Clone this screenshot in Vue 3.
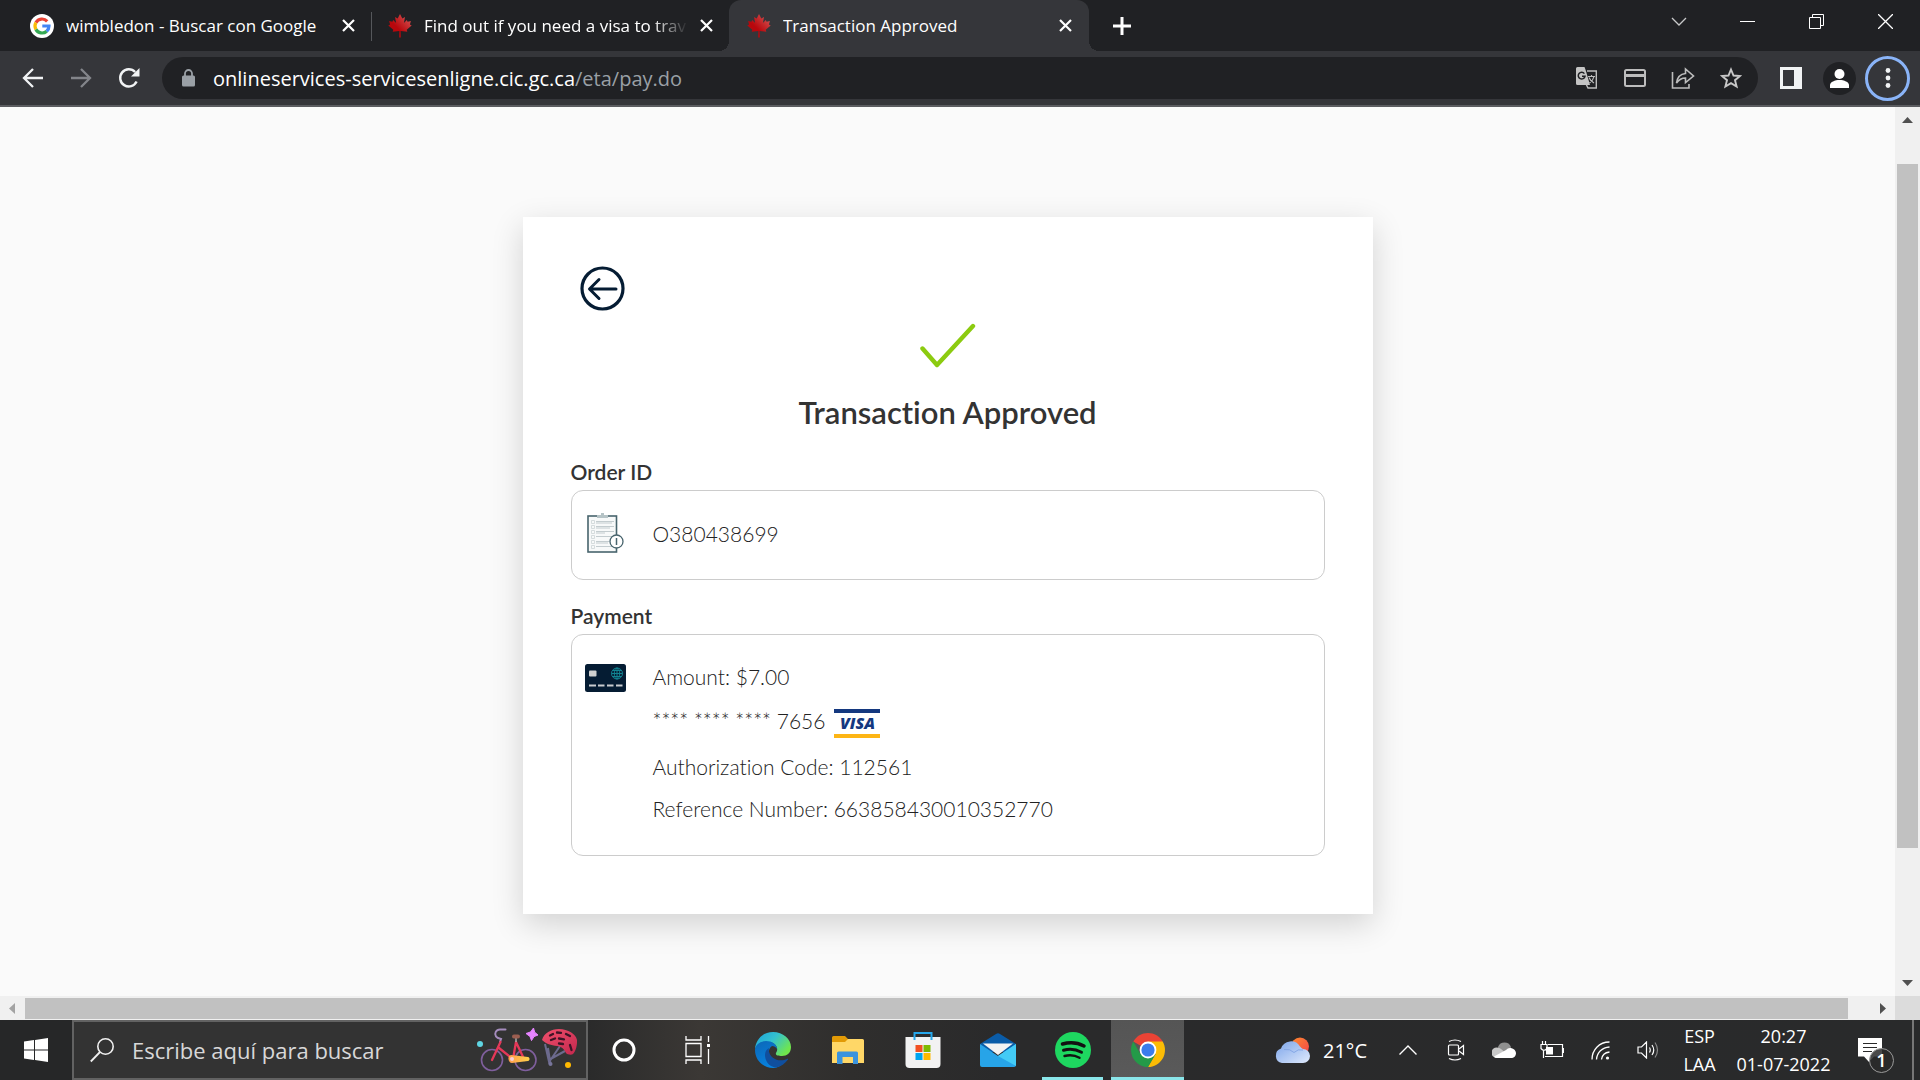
<script setup>
import { ref } from 'vue'

const host = ref('onlineservices-servicesenligne.cic.gc.ca')
const path = '/eta/pay.do'
const search = ref('')

const leaf =
  'M12 0l2.3 4.4 2.7-1.5-1.1 6 2.9-2.9.8 1.7 3.3-.6-1 3.3 1.8 1-5 4.3.6 2-6.7-.8.2 6.6h-1.600l.2-6.600-6.700 .8.6-2-5-4.300 1.800-1-1-3.300 3.300 .6.8-1.700 2.900 2.900-1.100-6 2.700 1.500z'

const tabs = [
  { title: 'wimbledon - Buscar con Google', icon: 'google', kind: 'first' },
  { title: 'Find out if you need a visa to trav', icon: 'leaf', kind: 'second' },
  { title: 'Transaction Approved', icon: 'leaf', kind: 'active' },
]
</script>

<template>
  <div class="desktop">
    <header class="tabstrip">
      <nav class="tabs" aria-label="Tabs">
        <div v-for="tab in tabs" :key="tab.title" class="tab" :class="tab.kind">
          <svg v-if="tab.icon === 'google'" class="favicon" viewBox="0 0 24 24">
            <circle cx="12" cy="12" r="12" fill="#fff" />
            <g fill="none" stroke-width="3.2">
              <path d="M17.200 7.300A7 7 0 0 0 5.900 8.600" stroke="#ea4335" />
              <path d="M5.900 8.600A7 7 0 0 0 5.900 15.400" stroke="#fbbc05" />
              <path d="M5.900 15.400A7 7 0 0 0 16.700 17.200" stroke="#34a853" />
              <path d="M16.700 17.200A7 7 0 0 0 19 12H12.300" stroke="#4285f4" />
            </g>
          </svg>
          <svg v-else class="favicon" viewBox="0 0 24 24">
            <defs>
              <linearGradient id="leafShade" x1="0" y1="1" x2="1" y2="0">
                <stop offset=".4" stop-color="#b8070c" />
                <stop offset="1" stop-color="#d9605f" />
              </linearGradient>
            </defs>
            <path :d="leaf" fill="url(#leafShade)" />
          </svg>
          <span class="tab-title">{{ tab.title }}</span>
          <button class="tab-close" aria-label="Close tab">
            <svg width="13" height="13" viewBox="0 0 13 13"><path d="M1 1l11 11M12 1L1 12" stroke="#fff" stroke-width="2.2" /></svg>
          </button>
        </div>
      </nav>
      <button class="new-tab" aria-label="New tab">
        <svg width="18" height="18" viewBox="0 0 18 18"><path d="M9 0v18M0 9h18" stroke="#fff" stroke-width="3" /></svg>
      </button>
      <div class="window-controls">
        <button aria-label="Search tabs"><svg width="16" height="16" viewBox="0 0 16 16"><path d="M1 4l7 7 7-7" fill="none" stroke="#c8c9ca" stroke-width="1.3" /></svg></button>
        <button aria-label="Minimize"><svg width="15" height="15" viewBox="0 0 15 15"><path d="M0 7.500h15" stroke="#fff" /></svg></button>
        <button aria-label="Restore"><svg width="15" height="15" viewBox="0 0 15 15"><path d="M.5 3.500h11v11H.5zM3.500 3.500V.5h11v11h-3" fill="none" stroke="#fff" /></svg></button>
        <button aria-label="Close"><svg width="15" height="15" viewBox="0 0 15 15"><path d="M0 0l15 15M15 0L0 15" stroke="#fff" stroke-width="1.3" /></svg></button>
      </div>
    </header>

    <div class="toolbar">
      <button class="tool" aria-label="Back"><svg width="22" height="22" viewBox="0 0 22 22"><path d="M21 11H3M11 2l-9 9 9 9" fill="none" stroke="#f1f3f4" stroke-width="2.3" /></svg></button>
      <button class="tool" aria-label="Forward"><svg width="22" height="22" viewBox="0 0 22 22"><path d="M1 11h18M11 2l9 9-9 9" fill="none" stroke="#83858a" stroke-width="2.3" /></svg></button>
      <button class="tool" aria-label="Reload"><svg width="22" height="22" viewBox="0 0 22 22"><path d="M18.600 14.500a8.600 8.600 0 1 1-1.500-9.500" fill="none" stroke="#f1f3f4" stroke-width="2.4" /><path d="M21.500 1v8.500H13z" fill="#f1f3f4" /></svg></button>
      <div class="omnibox">
        <svg class="lock" width="13" height="18" viewBox="0 0 13 18"><rect y="6.5" width="13" height="11" rx="1.5" fill="#9aa0a6" /><path d="M3 7V4.500a3.500 3.500 0 0 1 7 0V7" fill="none" stroke="#9aa0a6" stroke-width="1.8" /></svg>
        <label class="url"><input v-model="host" class="url-host" aria-label="Address" spellcheck="false" /><span class="url-path">{{ path }}</span></label>
        <button class="tool" aria-label="Translate">
          <svg width="22" height="22" viewBox="0 0 22 22">
            <path d="M11 4h9.300v17H12l-2-4" fill="none" stroke="#bdbdbd" stroke-width="1.4" />
            <path d="M1.500 0h7l1.200 3.200L14 18H1.500A1.500 1.500 0 0 1 0 16.500v-15A1.500 1.500 0 0 1 1.500 0z" fill="#c4c4c4" />
            <path d="M8.400 6.600A3.400 3.400 0 1 0 9 9.300H6" fill="none" stroke="#202124" stroke-width="1.5" />
            <path d="M12 9.500h7M15.500 8v1.500M18 9.500c-.6 3-2.500 5-4.500 6.500M13 10.500c1 2.500 3 4.500 5 5.500" fill="none" stroke="#bdbdbd" stroke-width="1.2" />
          </svg>
        </button>
        <button class="tool" aria-label="Payment methods"><svg width="22" height="18" viewBox="0 0 22 18"><rect x="1" y="1" width="20" height="16" rx="1.5" fill="none" stroke="#bdbdbd" stroke-width="2" /><path d="M1 6.500h20" stroke="#bdbdbd" stroke-width="3" /></svg></button>
        <button class="tool" aria-label="Share"><svg width="24" height="22" viewBox="0 0 24 22"><path d="M1.500 5v16H18v-4M5.500 16c.8-6 4-9 9-9.500V2l8 7-8 6.500v-4.500c-4 0-6.500 1.500-9 5z" fill="none" stroke="#bdbdbd" stroke-width="1.6" /></svg></button>
        <button class="tool" aria-label="Bookmark"><svg width="22" height="22" viewBox="0 0 22 22"><path d="M11 2.500l2.500 6 6.500.5-5 4.200 1.600 6.300-5.600-3.400-5.600 3.400L7 13.200 2 9l6.500-.5z" fill="none" stroke="#c8c8c8" stroke-width="1.9" /></svg></button>
      </div>
      <button class="tool" aria-label="Side panel"><svg width="22" height="22" viewBox="0 0 22 22"><path d="M0 0h22v22H0zM3 3v16h11V3z" fill="#f1f3f4" fill-rule="evenodd" /></svg></button>
      <button class="tool" aria-label="Profile"><svg width="33" height="33" viewBox="0 0 33 33"><circle cx="16.500" cy="16.500" r="16.500" fill="#202124" /><circle cx="16.500" cy="12" r="5" fill="#fff" /><path d="M7 26v-3c0-3 5-5 9.500-5s9.500 2 9.500 5v3z" fill="#fff" /></svg></button>
      <button class="menu" aria-label="Menu"><svg width="6" height="20" viewBox="0 0 6 20"><g fill="#f1f3f4"><circle cx="3" cy="2.500" r="2.400" /><circle cx="3" cy="10" r="2.400" /><circle cx="3" cy="17.500" r="2.400" /></g></svg></button>
    </div>

    <div class="viewport">
      <main class="page">
        <section class="card">
          <button class="back" aria-label="Back">
            <svg width="45" height="45" viewBox="0 0 45 45" fill="none" stroke="#051c33" stroke-width="3.2" stroke-linecap="round" stroke-linejoin="round"><circle cx="22.500" cy="22.500" r="20.500" /><path d="M36 23H10M19 13.500L9.500 23l9.500 9.500" stroke-width="3" /></svg>
          </button>
          <svg class="check" width="56" height="46" viewBox="0 0 56 46"><path d="M2.500 25.500L17 42 53 3" fill="none" stroke="#8ccb10" stroke-width="4.4" stroke-linecap="round" stroke-linejoin="round" /></svg>
          <h1>Transaction Approved</h1>

          <h2>Order ID</h2>
          <div class="panel order">
            <div class="panel-icon">
              <svg width="37" height="41" viewBox="0 0 37 41">
                <rect x="1" y="3" width="28.5" height="36" fill="#f7f9f9" stroke="#48646d" stroke-width="1.6" />
                <path d="M10 5V2h4V0h3v2h4v3z" fill="#b5c3c6" />
                <path d="M9 8.500h18M9 10h16M9 13.500h18M9 15h14M9 18.500h18M9 20h9M9 23.500h16M9 28.500h13M9 30h12M9 33.500h16" stroke="#c3cccf" stroke-width="1" />
                <path d="M4.500 7.500h3v3h-3zM4.500 12.500h3v3h-3zM4.500 17.500h3v3h-3zM4.500 22.500h3v3h-3zM4.500 27.500h3v3h-3zM4.500 32.500h3v3h-3z" fill="none" stroke="#ccd4d6" stroke-width=".8" />
                <circle cx="29.500" cy="28.500" r="6.500" fill="#fff" stroke="#48646d" stroke-width="1.3" />
                <path d="M29.500 25v7" stroke="#48646d" stroke-width="1.5" />
              </svg>
            </div>
            <div class="lines"><p>O380438699</p></div>
          </div>

          <h2>Payment</h2>
          <div class="panel payment">
            <div class="panel-icon">
              <svg width="41" height="28" viewBox="0 0 41 28">
                <rect width="41" height="28" rx="2.5" fill="#051c33" />
                <rect x="4" y="6.5" width="7.5" height="6" rx="1" fill="#d0d0d0" />
                <path d="M4 21.500h7M13 21.500h6.500M22 21.500h6.500M31 21.500h6.500" stroke="#c9ccd0" stroke-width="2.2" />
                <g fill="none" stroke="#118391" stroke-width="1"><circle cx="32" cy="9.500" r="5.500" /><ellipse cx="32" cy="9.500" rx="2.700" ry="5.500" /><path d="M26.500 9.500h11M32 4v11M27.500 6.500h9M27.500 12.500h9" /></g>
              </svg>
            </div>
            <div class="lines">
              <p>Amount: $7.00</p>
              <p class="account">**** **** **** 7656 <span class="visa">VISA</span></p>
              <p>Authorization Code: 112561</p>
              <p>Reference Number: 663858430010352770</p>
            </div>
          </div>
        </section>
      </main>
      <div class="vbar">
        <svg width="11" height="6" viewBox="0 0 11 6"><path d="M5.500 0L11 6H0z" fill="#505050" /></svg>
        <div class="vtrack"><div class="thumb"></div></div>
        <svg width="11" height="6" viewBox="0 0 11 6"><path d="M5.500 6L11 0H0z" fill="#505050" /></svg>
      </div>
      <div class="hbar">
        <svg width="6" height="11" viewBox="0 0 6 11"><path d="M0 5.500L6 0v11z" fill="#a3a3a3" /></svg>
        <div class="htrack"><div class="thumb"></div></div>
        <svg width="6" height="11" viewBox="0 0 6 11"><path d="M6 5.500L0 0v11z" fill="#505050" /></svg>
      </div>
      <div class="corner"></div>
    </div>

    <footer class="taskbar">
      <button class="start" aria-label="Start"><svg width="24" height="24" viewBox="0 0 24 24"><path d="M0 3.500l10-1.400v9.400H0zM11 2l13-2v11.500H11zM0 12.500h10v9.400L0 20.500zM11 12.500h13V24l-13-2z" fill="#fff" /></svg></button>
      <label class="search">
        <svg width="24" height="25" viewBox="0 0 24 25"><circle cx="15.500" cy="8.500" r="7.700" fill="none" stroke="#f0f0f0" stroke-width="1.6" /><path d="M10 14L.8 23.500" stroke="#f0f0f0" stroke-width="1.8" /></svg>
        <input v-model="search" type="text" placeholder="Escribe aquí para buscar" aria-label="Buscar" />
        <svg width="102" height="46" viewBox="0 0 102 46">
          <defs>
            <linearGradient id="helmet" x1="0" y1="0" x2="1" y2="1"><stop offset="0" stop-color="#f0506c" /><stop offset="1" stop-color="#c4284e" /></linearGradient>
            <linearGradient id="guard" x1="0" y1="0" x2="1" y2="0"><stop offset="0" stop-color="#ff9d4d" /><stop offset="1" stop-color="#ffd24a" /></linearGradient>
          </defs>
          <circle cx="3" cy="17" r="3" fill="#5fd6e4" />
          <g fill="none" stroke="#7f5f9d" stroke-width="1.6"><circle cx="15" cy="33" r="10.500" /><circle cx="48.500" cy="33" r="10.500" /></g>
          <path d="M28.500 2.500H23c-4 0-6 4-4 7 1 1.500 3 2 5 2.500l-1 3" fill="none" stroke="#a58cbd" stroke-width="2" stroke-linecap="round" />
          <path d="M23.500 15L15 33M22 21l15 12M39 15l8.500 18M39 15l-3 17" fill="none" stroke="#e43858" stroke-width="2.3" stroke-linecap="round" />
          <path d="M39 9v6" stroke="#aaa" stroke-width="1.5" />
          <rect x="35" y="7.5" width="8" height="4" rx="2" fill="#9c5e50" />
          <path d="M34 28l17 2c2 .5 2 3.500 0 4l-16 2c-4 0-5-7.500-1-8z" fill="url(#guard)" />
          <circle cx="35" cy="32" r="2" fill="#f4cfd8" />
          <path d="M56.500 1l1.200 4.200L61 8l-4 1.600-2.500 4L53 9.500 49 6.500l4.500-1.500z" fill="#e684ff" stroke="#e684ff" stroke-linejoin="round" />
          <path d="M68 17l4.500 20M71 21l2.500 16M73.500 32L88 24M83 19l-9.500 14" fill="none" stroke="#6c6a8d" stroke-width="2" stroke-linejoin="round" />
          <circle cx="73.500" cy="37" r="2" fill="#77759b" />
          <path d="M65 13C67 6 74 2 82 2c9 0 17 5 18 11 .3 5-1 11-4 14-1.500 1.500-6 .5-7-1-2-4-4-6.500-9-7-6-.8-11-2-15-6z" fill="url(#helmet)" />
          <path d="M73 8.500l3-1.500M80 5.500l4 .3M89 7l4 2M74 13l4-1.500M82 11.500l5 .8M82 16.500l4 .5M93 18l1.500 5" stroke="#3c1426" stroke-width="2.3" stroke-linecap="round" />
          <circle cx="91" cy="38" r="3" fill="#ffb900" />
        </svg>
      </label>

      <div class="apps">
        <button class="cortana" aria-label="Cortana"><svg width="24" height="24" viewBox="0 0 24 24"><circle cx="12" cy="12" r="10" fill="none" stroke="#fff" stroke-width="3" /></svg></button>
        <button aria-label="Task view"><svg width="25" height="28" viewBox="0 0 25 28" fill="none" stroke="#fff" stroke-width="1.3"><path d="M1 0v4h15V0M1 7.500h15v13H1zM1 28v-4h15v4M23.500 0v6M23.500 13v15" /><rect x="22" y="8" width="3" height="3" fill="#fff" stroke="none" /></svg></button>
        <button aria-label="Edge">
          <svg width="36" height="36" viewBox="0 0 36 36">
            <defs>
              <linearGradient id="edgeTop" x1="0" y1="0" x2="1" y2=".6"><stop offset="0" stop-color="#1ba3dc" /><stop offset=".5" stop-color="#34c1d0" /><stop offset="1" stop-color="#70e64c" /></linearGradient>
              <linearGradient id="edgeBody" x1="0" y1="0" x2=".5" y2="1"><stop offset="0" stop-color="#0c67b7" /><stop offset="1" stop-color="#0783e0" /></linearGradient>
            </defs>
            <path d="M0 17C1 7 8 0 18 0s18 7 18 15c0 6-4 9-9 9-4 0-7-1-6-3 1-2 1.500-3 1-5-1-4-5-6-9-6C7 10 2 12 0 17z" fill="url(#edgeTop)" />
            <path d="M0 18c0-5 5-9 11-9 6 0 11 3 11 8-1-2-3-3-5-3-3 2-4 6-3 10 1 5 6 8 11 8 1 0 2 0 3-.5C25 34 22 36 18 36 8 36 0 28 0 18z" fill="url(#edgeBody)" />
            <path d="M14 16c-4 2-5 7-3 12 2 5 6 7 10 7.500 5-1 9-4 12-8 .5-1-.5-1-1-.6-3 1.500-7 2-11 .6-5-2-8-7-7-11.500z" fill="#104f9e" />
          </svg>
        </button>
        <button aria-label="Files">
          <svg width="32" height="28" viewBox="0 0 32 28">
            <path d="M0 1.500A1.500 1.500 0 0 1 1.500 0H13l3 3v4H0z" fill="#e29a06" />
            <path d="M0 6h13l3-3h14.500A1.500 1.500 0 0 1 32 4.500V27H0z" fill="#ffd767" />
            <path d="M5 27V17a1.500 1.500 0 0 1 1.500-1.500h18A1.500 1.500 0 0 1 26 17v11h-5v-7H10.500v7H5z" fill="#3b93dd" />
          </svg>
        </button>
        <button aria-label="Store">
          <svg width="36" height="36" viewBox="0 0 36 36">
            <path d="M.5 5h35v27a4 4 0 0 1-4 4h-27a4 4 0 0 1-4-4z" fill="#f2f2f2" />
            <path d="M9.500 8V1h17v7" fill="none" stroke="#27a8ec" stroke-width="2" />
            <path d="M10.500 13h7v7h-7z" fill="#f25022" /><path d="M18.500 13h7v7h-7z" fill="#7fba00" /><path d="M10.500 21h7v7h-7z" fill="#00a4ef" /><path d="M18.500 21h7v7h-7z" fill="#ffb900" />
          </svg>
        </button>
        <button aria-label="Mail">
          <svg width="36" height="34" viewBox="0 0 36 34">
            <path d="M0 11L16 1q2-1.500 4 0l16 10-6 8H6z" fill="#0a5ca8" />
            <path d="M0 11l18 12L36 11v21a2 2 0 0 1-2 2H2a2 2 0 0 1-2-2z" fill="#27a4e8" />
            <path d="M18 23l18-12v22z" fill="#43cbf6" />
            <path d="M3 10.500h30L18 22z" fill="#f3f3f3" />
          </svg>
        </button>
        <button class="running spotify" aria-label="Spotify">
          <svg width="36" height="36" viewBox="0 0 36 36"><circle cx="18" cy="18" r="18" fill="#1ed760" /><g fill="none" stroke="#121212" stroke-linecap="round"><path d="M7.500 12c7-2 15-1.500 21.500 2" stroke-width="3.5" /><path d="M8.500 18.300c6-1.700 12.500-1 18 2" stroke-width="3" /><path d="M9.500 24c5-1.300 10.500-.8 15 1.800" stroke-width="2.4" /></g></svg>
        </button>
        <button class="running current" aria-label="Chrome">
          <svg width="34" height="34" viewBox="0 0 34 34">
            <path d="M17 17L2.300 8.500A17 17 0 0 1 31.700 8.500z" fill="#ea4335" /><path d="M17 8.500h14.700A17 17 0 0 1 17 34l7.400-12.800z" fill="#fbbc05" /><path d="M2.300 8.500A17 17 0 0 0 17 34l7.400-12.800L17 17l-7.400 4.300z" fill="#249a48" />
            <circle cx="17" cy="17" r="8.400" fill="#fff" /><circle cx="17" cy="17" r="6.600" fill="#3a7cec" />
          </svg>
        </button>
      </div>

      <div class="tray">
        <button class="weather">
          <svg width="37" height="26" viewBox="0 0 37 26">
            <defs><linearGradient id="cloud" x1="0" y1="0" x2="1" y2="1"><stop offset="0" stop-color="#7ba4ea" /><stop offset="1" stop-color="#e0eafc" /></linearGradient><linearGradient id="sun" x1="0" y1="0" x2="1" y2="1"><stop offset="0" stop-color="#ff8b2e" /><stop offset="1" stop-color="#f2434b" /></linearGradient></defs>
            <circle cx="26" cy="9.500" r="9" fill="url(#sun)" />
            <path d="M8 26a7.500 7.500 0 0 1-1-14.500A10.500 10.500 0 0 1 26 9.500q2 2 3 2.500a7 7 0 0 1 0 14z" fill="url(#cloud)" />
            <path d="M10 12.500q6-1 10 3 4-4 9-2.500" fill="none" stroke="#86a8e6" stroke-width="1" />
          </svg>
          <span>21°C</span>
        </button>
        <button aria-label="Hidden icons"><svg width="18" height="10" viewBox="0 0 18 10"><path d="M.5 9.500L9 1l8.500 8.500" fill="none" stroke="#fff" stroke-width="1.4" /></svg></button>
        <button aria-label="Camera"><svg width="18" height="22" viewBox="0 0 18 22" fill="none" stroke="#fff" stroke-width="1.2"><rect x="1.5" y="6" width="10" height="10" rx="1" /><path d="M12 10l4.500-3.500v9L12 12M2 2.500q6-3 12 0M2 19.500q6 3 12 0" /></svg></button>
        <button aria-label="OneDrive"><svg width="24" height="16" viewBox="0 0 24 16"><path d="M6 5a7 7 0 0 1 13 0l-2 6H7z" fill="#8f8f8f" /><path d="M4.500 16A5 5 0 0 1 5 5.500c3 0 6 3 8 5z" fill="#c8c8c8" /><path d="M2 14.500L14 8q2-2.500 5-2 4.500 1 5 5c0 3-2 5-5 5H5q-2 0-3-1.500z" fill="#fff" /></svg></button>
        <button aria-label="Battery"><svg width="24" height="18" viewBox="0 0 24 18"><path d="M8 3.500h14.500v12H5M3.500 9v8M1 3.500h6v4Q4 11 1 7.500zM2.500 0v3M5.500 0v3" fill="none" stroke="#fff" stroke-width="1.2" /><path d="M6 6h7v7.500H6zM23 7h1v5h-1z" fill="#fff" /></svg></button>
        <button aria-label="Network"><svg width="19" height="19" viewBox="0 0 19 19" fill="none" stroke="#fff" stroke-width="1.3"><path d="M1 18.500C1 9 8 1 18.500 1M5.500 18.500C6 11.500 11 6.500 18.500 6M10.500 18.500c.5-4 3.500-7 8-7.500" /><circle cx="16.500" cy="17" r="1.600" fill="#fff" stroke="none" /></svg></button>
        <button aria-label="Volume"><svg width="22" height="18" viewBox="0 0 22 18" fill="none" stroke="#fff" stroke-width="1.2"><path d="M1 6h3.500l5-5v16l-5-5H1zM12.500 6.500q1.500 2.500 0 5M15 4q3.500 5 0 10" /><path d="M18 1.500q5 7.500 0 15" stroke="#888" /></svg></button>
        <button class="lang"><span>ESP</span><span>LAA</span></button>
        <button class="clock"><span>20:27</span><span>01-07-2022</span></button>
        <button class="notify" aria-label="Notifications">
          <svg width="24" height="24" viewBox="0 0 24 24"><path d="M0 0h24v18.500H16L11 24l-5-5.500H0z" fill="#fff" /><path d="M5 5.500h14M5 9.500h14M5 13.500h9" stroke="#2a2a2a" stroke-width="1.2" /></svg>
          <span class="badge">1</span>
        </button>
        <button class="show-desktop" aria-label="Show desktop"></button>
      </div>
    </footer>
  </div>
</template>

<style>
html,
body {
  margin: 0;
}
</style>

<style scoped>
.desktop {
  display: flex;
  flex-direction: column;
  min-height: 100vh;
  font-family: "Open Sans", "Noto Sans", sans-serif;
  background: #fafafa;
}
button {
  display: flex;
  align-items: center;
  justify-content: center;
  padding: 0;
  border: 0;
  background: none;
  color: inherit;
  font: inherit;
}
input {
  min-width: 0;
  padding: 0;
  border: 0;
  outline: 0;
  background: none;
  color: inherit;
  font: inherit;
}
svg {
  display: block;
  flex: none;
}

/* Tab strip */
.tabstrip {
  display: flex;
  height: 51px;
  background: #202124;
  color: #fff;
}
.tabs {
  display: flex;
}
.tab {
  position: relative;
  display: flex;
  align-items: center;
  gap: 12px;
  box-sizing: border-box;
  padding: 0 17px;
  font-size: 17px;
}
.tab.first {
  width: 372px;
  padding-left: 30px;
}
.tab.second {
  width: 357px;
  padding: 0 16px;
}
.tab.first::after {
  content: "";
  position: absolute;
  right: 0;
  top: 12px;
  width: 1px;
  height: 29px;
  background: #55575b;
}
.tab.active {
  width: 360px;
  padding-left: 18px;
  border-radius: 12px 12px 0 0;
  background: #35363a;
}
.tab.active::before,
.tab.active::after {
  content: "";
  position: absolute;
  bottom: 0;
  width: 10px;
  height: 10px;
}
.tab.active::before {
  left: -10px;
  background: radial-gradient(circle at 0 0, transparent 10px, #35363a 10px);
}
.tab.active::after {
  right: -10px;
  background: radial-gradient(circle at 100% 0, transparent 10px, #35363a 10px);
}
.favicon {
  width: 24px;
  height: 24px;
}
.tab-title {
  flex: 1;
  overflow: hidden;
  white-space: nowrap;
}
.second .tab-title {
  mask-image: linear-gradient(to right, #000 calc(100% - 36px), transparent);
}
.new-tab {
  width: 66px;
}
.window-controls {
  display: flex;
  height: 43px;
  margin-left: auto;
}
.window-controls button {
  width: 69px;
}

/* Toolbar */
.toolbar {
  display: flex;
  align-items: center;
  height: 54px;
  padding: 0 10px 0 9px;
  border-bottom: 2px solid #5b5c60;
  background: #35363a;
}
.tool {
  flex: none;
  width: 48px;
  height: 42px;
}
.omnibox {
  display: flex;
  flex: 1;
  align-items: center;
  height: 42px;
  margin: 0 9px;
  padding: 0 3px 0 20px;
  border-radius: 21px;
  background: #202124;
}
.url {
  display: flex;
  flex: 1;
  align-items: center;
  margin-left: 18px;
  padding-top: 2px;
  font-size: 20px;
  line-height: 28px;
}
.url-host {
  field-sizing: content;
  color: #fff;
}
.url-path {
  color: #9aa0a6;
}
.menu {
  box-sizing: border-box;
  width: 45px;
  height: 45px;
  margin-left: 2px;
  border: 3px solid #8ab4f8;
  border-radius: 50%;
}

/* Page area with its scroll bars */
.viewport {
  display: grid;
  flex: 1;
  grid-template-columns: 1fr 25px;
  grid-template-rows: 1fr 24px;
}
.page {
  padding: 110px 24px 82px;
  background: #fafafa;
  font-family: Lato, sans-serif;
  font-variant-ligatures: none;
  color: #333;
}
.card {
  box-sizing: border-box;
  width: 100%;
  max-width: 850px;
  margin: 0 auto;
  padding: 49px 48px 58px;
  background: #fff;
  box-shadow: 0 10px 30px rgba(0, 0, 0, 0.16);
}
.back {
  margin-left: 9px;
}
.check {
  margin: 12px auto 0;
}
h1 {
  margin: 19px 0 0;
  font-size: 31px;
  font-weight: 600;
  line-height: 48px;
  text-align: center;
}
h2 {
  margin: 22px 0 4px;
  font-size: 21px;
  font-weight: 600;
  line-height: 28px;
}
.panel {
  display: flex;
  box-sizing: border-box;
  border: 1px solid #ccc;
  border-radius: 12px;
}
.panel-icon {
  display: flex;
  justify-content: center;
  width: 67px;
}
.order {
  padding: 22px 0 24px;
}
.payment {
  padding: 21px 0 25px;
}
.payment .panel-icon {
  padding-top: 8px;
}
.lines {
  padding-left: 14px;
  color: #222;
}
.lines p {
  margin: 0;
  font-size: 21px;
  font-weight: 300;
  line-height: 42px;
}
.lines .account {
  display: flex;
  align-items: center;
  gap: 9px;
  box-sizing: border-box;
  height: 48px;
  padding-bottom: 2px;
}
.visa {
  box-sizing: border-box;
  width: 46px;
  height: 29px;
  margin-top: 4px;
  border-top: 4px solid #14387f;
  border-bottom: 4px solid #fdb515;
  color: #14387f;
  font: italic 800 16px/21px "Open Sans", sans-serif;
  text-align: center;
}
.vbar {
  display: flex;
  flex-direction: column;
  align-items: center;
  padding: 10px 0;
  background: #f0f0f0;
}
.vtrack {
  flex: 1;
  width: 21px;
  padding: 41px 0 132px;
}
.thumb {
  height: 100%;
  background: #c1c1c1;
}
.hbar {
  display: flex;
  align-items: center;
  padding: 0 9px;
  background: #f0f0f0;
}
.htrack {
  flex: 1;
  height: 21px;
  padding: 0 32px 0 10px;
}
.corner {
  background: #dcdcdc;
}

/* Taskbar */
.taskbar {
  display: flex;
  height: 60px;
  background: linear-gradient(to right, #262728 560px, #3b3835 700px, #2f2e2d 850px, #2a2a2b 1000px, #292a2b);
  color: #fff;
}
.start {
  width: 72px;
}
.search {
  display: flex;
  align-items: center;
  box-sizing: border-box;
  width: 516px;
  padding: 0 7px 0 16px;
  border: 2px solid #626262;
  background: #333;
}
.search input {
  flex: 1;
  margin-left: 18px;
  font-size: 22px;
}
.search input::placeholder {
  color: #d8d8d8;
  opacity: 1;
}
.apps {
  display: flex;
}
.apps button {
  position: relative;
  width: 75px;
}
.apps .cortana {
  width: 72px;
}
.running::after {
  content: "";
  position: absolute;
  right: 1px;
  bottom: 0;
  left: 1px;
  height: 3px;
  background: #8ae6ea;
}
.spotify::after {
  right: 7px;
  left: 7px;
}
.apps .current {
  background: linear-gradient(#555, #5a5a5a) center / 73px 100% no-repeat;
}
.tray {
  display: flex;
  margin-left: auto;
  font-size: 18px;
}
.tray button {
  width: 48px;
}
.tray .weather {
  gap: 12px;
  width: auto;
  padding-right: 17px;
  font-size: 20px;
}
.tray .lang,
.tray .clock {
  flex-direction: column;
  width: 55px;
  line-height: 28px;
}
.tray .clock {
  width: 113px;
}
.tray .notify {
  position: relative;
  width: 72px;
  padding-right: 12px;
}
.badge {
  position: absolute;
  top: 28px;
  left: 29px;
  box-sizing: border-box;
  width: 25px;
  height: 25px;
  border: 1px solid #9a9a9a;
  border-radius: 50%;
  background: rgba(42, 42, 42, 0.85);
  font-weight: 600;
  line-height: 23px;
  text-align: center;
}
.tray .show-desktop {
  width: 8px;
  border-left: 2px solid #777;
}
</style>
